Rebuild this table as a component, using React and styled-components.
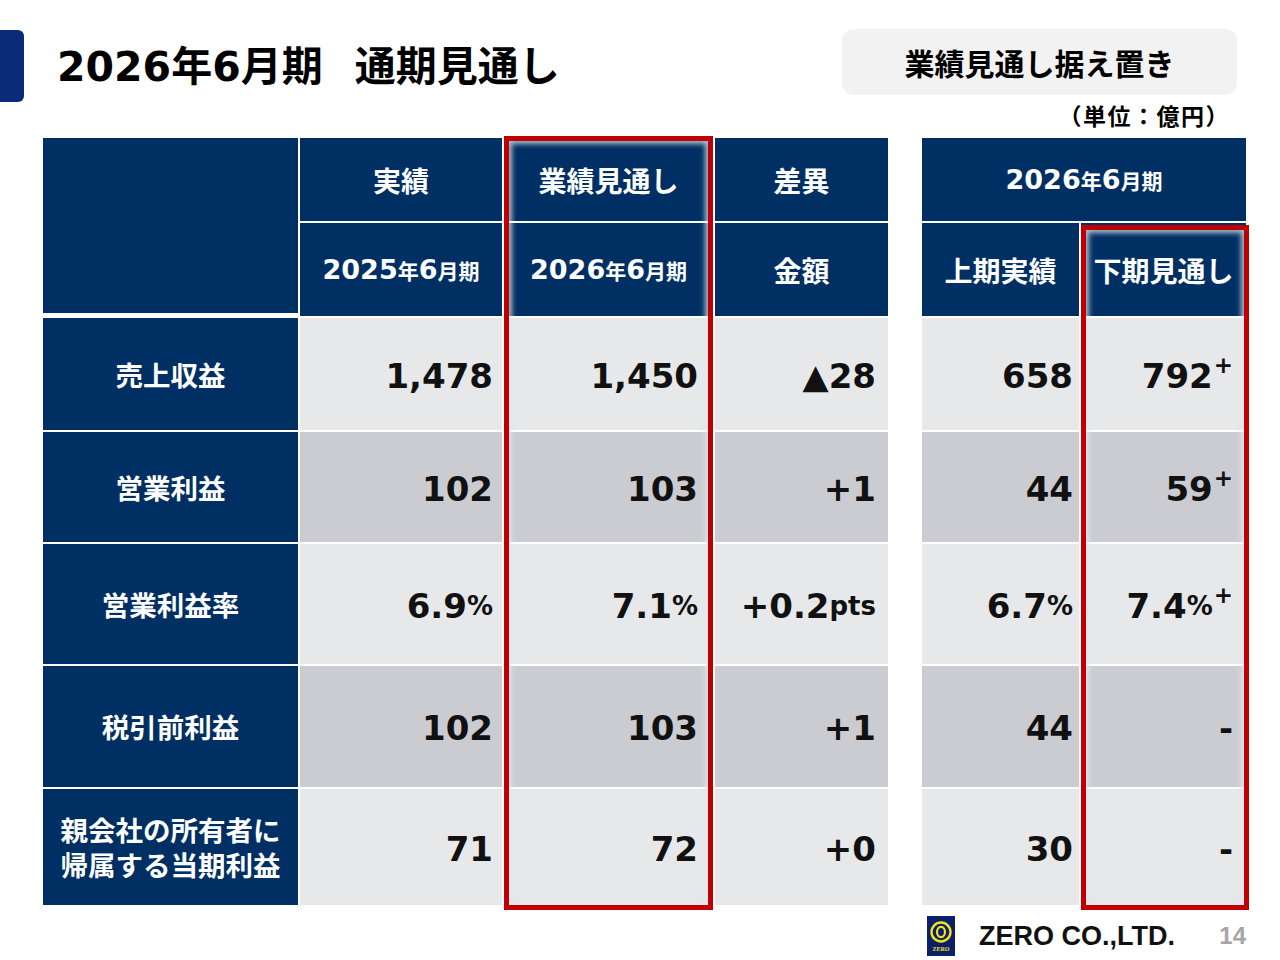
import React from 'react'
import styled, { createGlobalStyle } from 'styled-components'

const GlobalStyle = createGlobalStyle`
  body {
    margin: 0;
    background: #fff;
  }
`

const NAVY = '#003063'
const LIGHT = '#e7e8ea'
const DARK = '#cbccd1'

const Page = styled.div`
  width: 1280px;
  height: 960px;
  background: #fff;
  font-family: 'DejaVu Sans', 'Noto Sans CJK JP', sans-serif;
  color: #111;
  overflow: hidden;
`

const TopBar = styled.header`
  display: flex;
  align-items: flex-start;
  padding-top: 29px;
`

const Accent = styled.div`
  width: 24px;
  height: 72px;
  margin-top: 1px;
  background: #0b2a78;
  border-radius: 0 6px 6px 0;
`

const Title = styled.h1`
  margin: -2px 0 0 33px;
  font-size: 41px;
  font-weight: 700;
  line-height: 72px;
  color: #000;
`

const Kanji = styled.span`
  font-family: 'Noto Sans CJK JP', sans-serif;
  font-size: ${(p) => p.$size || 'inherit'};
`

const Gap = styled.span`
  display: inline-block;
  width: 32px;
`

const Pill = styled.div`
  margin-left: auto;
  margin-right: 43px;
  width: 395px;
  height: 66px;
  border-radius: 12px;
  background: #f2f2f2;
  display: flex;
  align-items: center;
  justify-content: center;
  font-family: 'Noto Sans CJK JP', sans-serif;
  font-size: 30px;
  font-weight: 700;
  color: #000;
`

const UnitLine = styled.div`
  margin-top: -1px;
  padding-right: 50px;
  text-align: right;
  font-family: 'Noto Sans CJK JP', sans-serif;
  font-size: 23px;
  font-weight: 700;
  letter-spacing: 1.5px;
  line-height: 26px;
  color: #000;
`

const Tables = styled.div`
  display: flex;
  gap: 34px;
  margin: 10px 0 0 43px;
`

const rows = '83px 93px 112px 110px 120px 121px 116px'

const LeftGrid = styled.div`
  display: grid;
  grid-template-columns: 255px 202px 209px 173px;
  grid-template-rows: ${rows};
  gap: 2px;
`

const RightGrid = styled.div`
  display: grid;
  grid-template-columns: 157px 165px;
  grid-template-rows: ${rows};
  gap: 2px;
`

const Placed = styled.div`
  grid-column: ${(p) => p.$col};
  grid-row: ${(p) => p.$row};
`

const HeadCell = styled(Placed)`
  background: ${NAVY};
  color: #fff;
  display: flex;
  align-items: center;
  justify-content: center;
  font-family: 'Noto Sans CJK JP', sans-serif;
  font-size: 28px;
  font-weight: 700;
  margin-bottom: ${(p) => p.$mb || 0};
`

const PeriodDigits = styled.span`
  font-family: 'DejaVu Sans', sans-serif;
  font-size: 27px;
`

const RowLabel = styled(Placed)`
  background: ${NAVY};
  color: #fff;
  display: flex;
  align-items: center;
  justify-content: center;
  text-align: center;
  font-family: 'Noto Sans CJK JP', sans-serif;
  font-size: 27.5px;
  font-weight: 700;
  line-height: 35px;
`

const ValueCell = styled(Placed)`
  background: ${(p) => (p.$dark ? DARK : LIGHT)};
  display: flex;
  align-items: center;
  justify-content: flex-end;
  padding-right: ${(p) => p.$pad}px;
  padding-top: 3px;
  font-size: 34px;
  font-weight: 700;
  color: #111;
  white-space: nowrap;
`

const Small = styled.span`
  font-size: 26px;
`

const Sup = styled.span`
  display: inline-block;
  font-size: 23px;
  transform: translateY(-11px);
  margin-left: 1px;
`

const Frame = styled(Placed)`
  margin: ${(p) => p.$margin};
  border: 5px solid #c00000;
  box-shadow: inset 0 0 5px 3px rgba(225, 232, 240, 0.75);
  pointer-events: none;
  z-index: 1;
`

const Footer = styled.footer`
  display: flex;
  align-items: center;
  margin-top: 10px;
  padding-left: 927px;
  height: 42px;
`

const CompanyName = styled.span`
  margin-left: 24px;
  font-family: 'Liberation Sans', Arial, sans-serif;
  font-size: 27px;
  font-weight: 700;
  color: #111;
`

const PageNo = styled.span`
  margin-left: auto;
  margin-right: 34px;
  font-family: 'Liberation Sans', Arial, sans-serif;
  font-size: 24px;
  font-weight: 700;
  color: #a6a6a6;
`

const Period = ({ year }) => (
  <>
    <PeriodDigits>{year}</PeriodDigits>
    <Kanji $size="21px">年</Kanji>
    <PeriodDigits>6</PeriodDigits>
    <Kanji $size="21px">月期</Kanji>
  </>
)

const Logo = () => (
  <svg width="28" height="40" viewBox="0 0 28 40">
    <rect width="28" height="40" fill="#0c1f6b" />
    <circle cx="14" cy="16" r="9.5" fill="none" stroke="#f2e21b" strokeWidth="2.4" />
    <ellipse cx="14" cy="16" rx="4" ry="5.2" fill="none" stroke="#f2e21b" strokeWidth="2.2" />
    <text
      x="14"
      y="35"
      textAnchor="middle"
      fontSize="6"
      fontWeight="700"
      fill="#f2e21b"
      fontFamily="Liberation Serif, serif"
    >
      ZERO
    </text>
  </svg>
)

const data = [
  {
    label: '売上収益',
    dark: false,
    values: ['1,478', '1,450', '▲28'],
    h1: '658',
    h2: <>792<Sup>+</Sup></>,
  },
  {
    label: '営業利益',
    dark: true,
    values: ['102', '103', '+1'],
    h1: '44',
    h2: <>59<Sup>+</Sup></>,
  },
  {
    label: '営業利益率',
    dark: false,
    values: [
      <>6.9<Small>%</Small></>,
      <>7.1<Small>%</Small></>,
      <>+0.2<Small>pts</Small></>,
    ],
    h1: <>6.7<Small>%</Small></>,
    h2: <>7.4<Small>%</Small><Sup>+</Sup></>,
  },
  {
    label: '税引前利益',
    dark: true,
    values: ['102', '103', '+1'],
    h1: '44',
    h2: '-',
  },
  {
    label: (
      <>
        親会社の所有者に
        <br />
        帰属する当期利益
      </>
    ),
    dark: false,
    values: ['71', '72', '+0'],
    h1: '30',
    h2: '-',
  },
]

const leftPads = [9, 15, 12]

export default function App() {
  return (
    <Page>
      <GlobalStyle />
      <TopBar>
        <Accent />
        <Title>
          2026<Kanji>年</Kanji>6<Kanji>月期</Kanji>
          <Gap />
          <Kanji>通期見通し</Kanji>
        </Title>
        <Pill>業績見通し据え置き</Pill>
      </TopBar>
      <UnitLine>（単位：億円）</UnitLine>

      <Tables>
        <LeftGrid>
          <HeadCell $col="1" $row="1 / 3" $mb="3px" />
          <HeadCell $col="2" $row="1">実績</HeadCell>
          <HeadCell $col="3" $row="1">業績見通し</HeadCell>
          <HeadCell $col="4" $row="1">差異</HeadCell>
          <HeadCell $col="2" $row="2">
            <Period year="2025" />
          </HeadCell>
          <HeadCell $col="3" $row="2">
            <Period year="2026" />
          </HeadCell>
          <HeadCell $col="4" $row="2">金額</HeadCell>
          {data.map((row, i) => (
            <React.Fragment key={i}>
              <RowLabel $col="1" $row={i + 3}>
                {row.label}
              </RowLabel>
              {row.values.map((v, j) => (
                <ValueCell
                  key={j}
                  $col={j + 2}
                  $row={i + 3}
                  $dark={row.dark}
                  $pad={leftPads[j]}
                >
                  {v}
                </ValueCell>
              ))}
            </React.Fragment>
          ))}
          <Frame $col="3" $row="1 / -1" $margin="-2px 0 -5px 0" />
        </LeftGrid>

        <RightGrid>
          <HeadCell $col="1 / 3" $row="1">
            <Period year="2026" />
          </HeadCell>
          <HeadCell $col="1" $row="2">上期実績</HeadCell>
          <HeadCell $col="2" $row="2">下期見通し</HeadCell>
          {data.map((row, i) => (
            <React.Fragment key={i}>
              <ValueCell $col="1" $row={i + 3} $dark={row.dark} $pad={6}>
                {row.h1}
              </ValueCell>
              <ValueCell $col="2" $row={i + 3} $dark={row.dark} $pad={13}>
                {row.h2}
              </ValueCell>
            </React.Fragment>
          ))}
          <Frame $col="2" $row="2 / -1" $margin="2px -3px -5px 0" />
        </RightGrid>
      </Tables>

      <Footer>
        <Logo />
        <CompanyName>ZERO CO.,LTD.</CompanyName>
        <PageNo>14</PageNo>
      </Footer>
    </Page>
  )
}
